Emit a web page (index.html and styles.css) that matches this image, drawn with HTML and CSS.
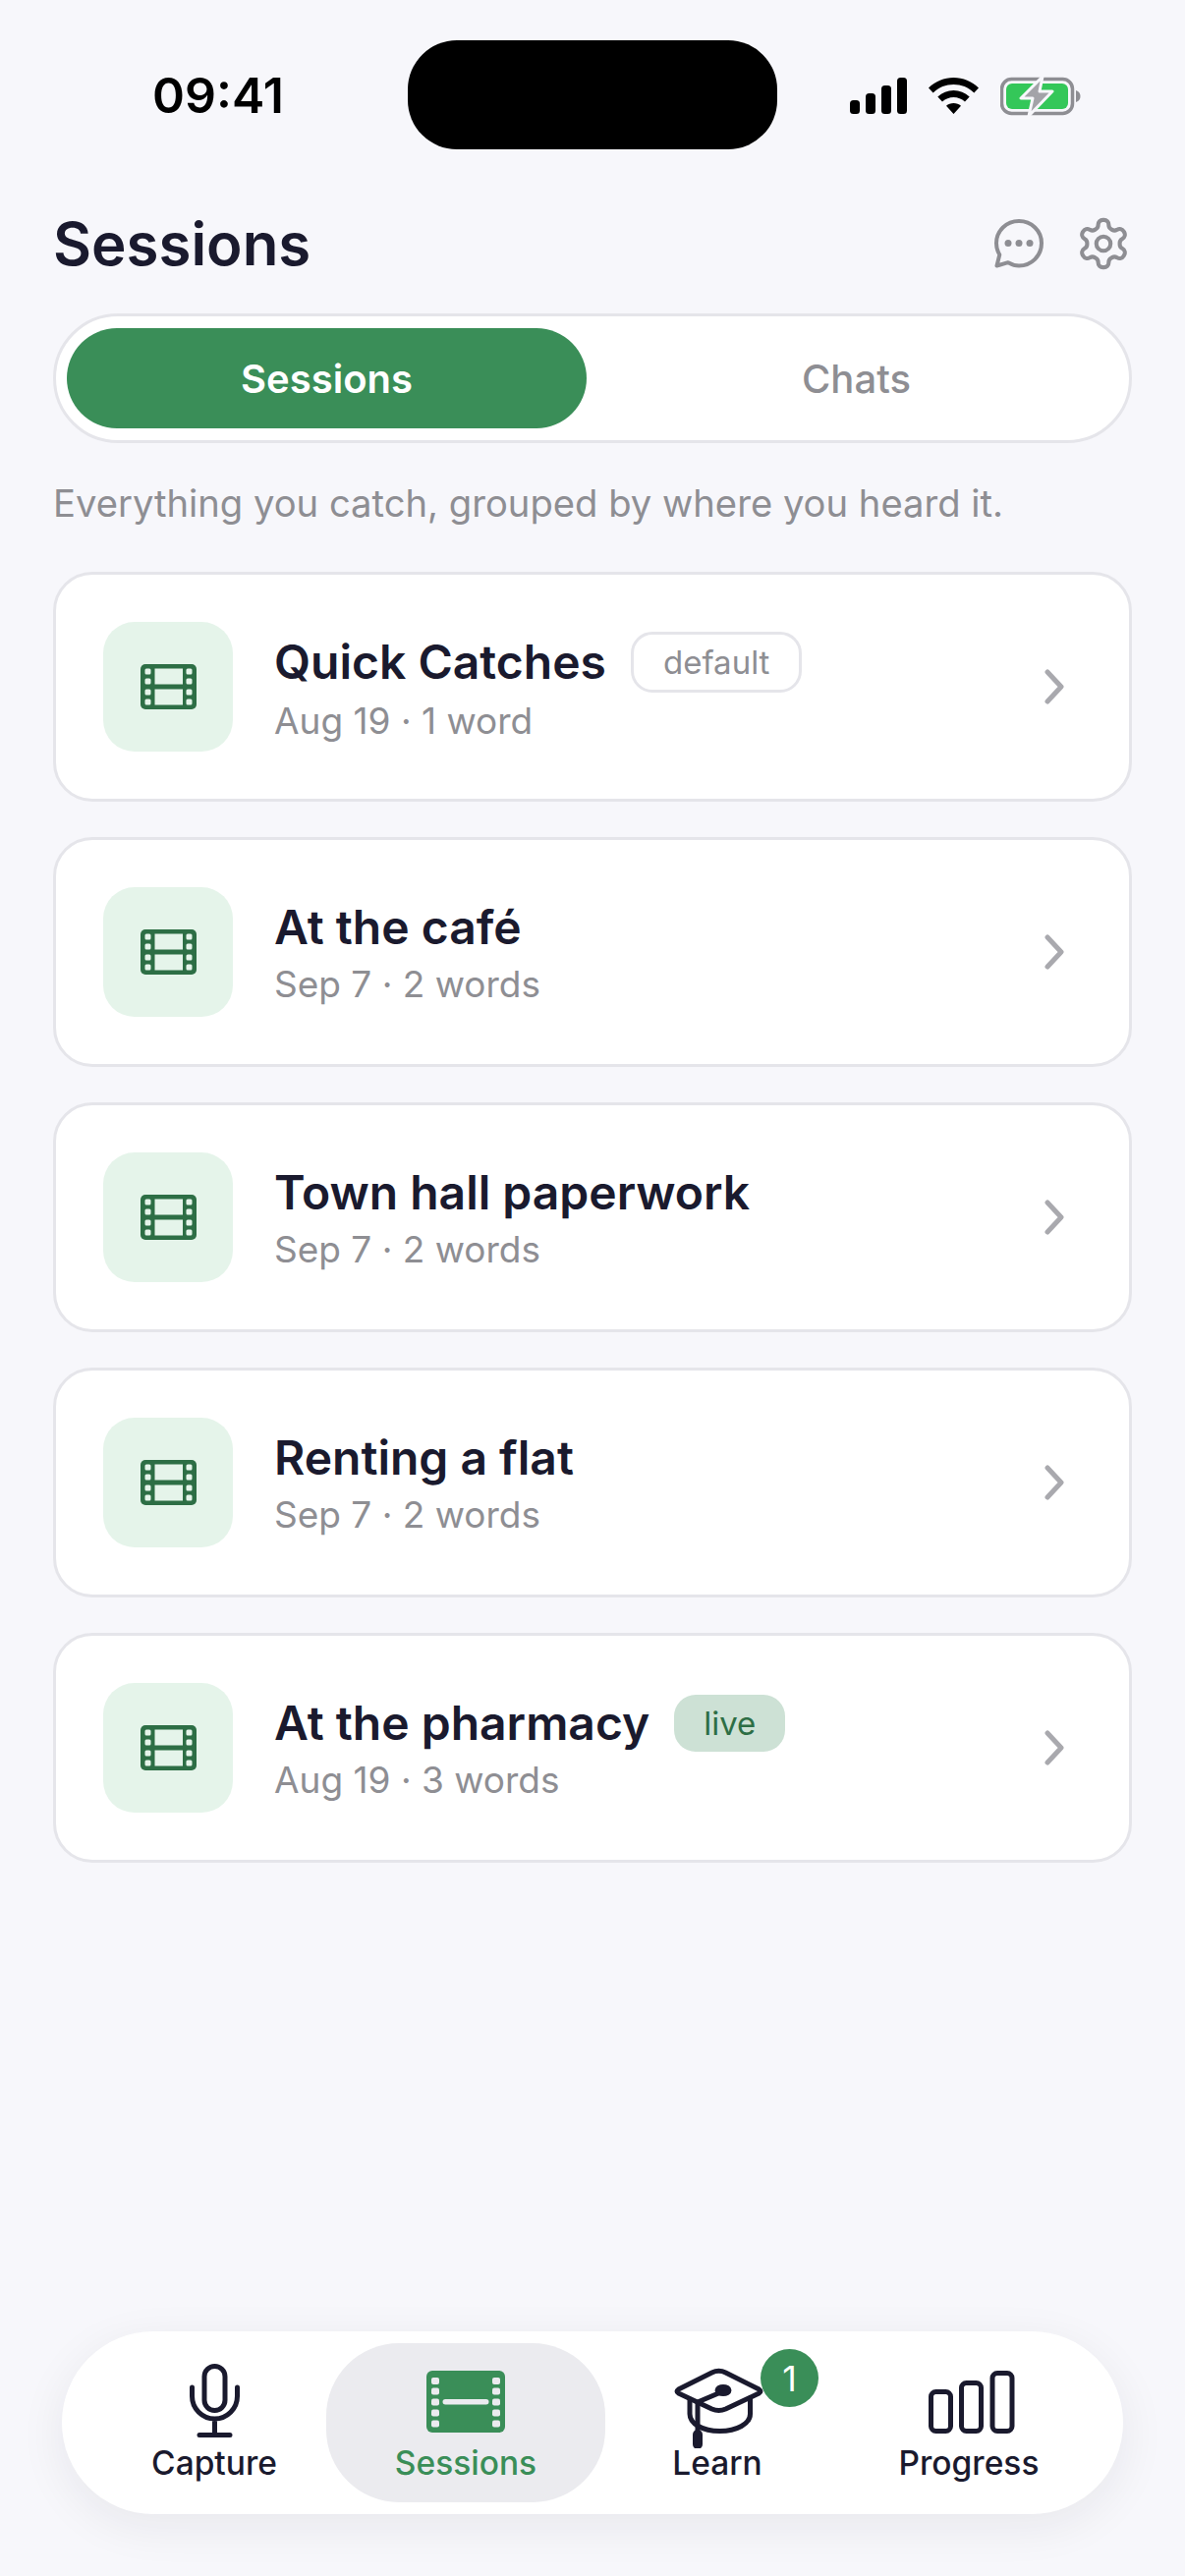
FILE: index.html
```html
<!DOCTYPE html>
<html lang="en">
<head>
<meta charset="utf-8">
<title>Sessions</title>
<link rel="stylesheet" href="styles.css">
</head>
<body>
<svg class="defs" width="0" height="0" aria-hidden="true">
  <symbol id="film" viewBox="0 0 57 46">
    <rect width="57" height="46" rx="5" fill="#2d6e45"/>
    <g fill="#e5f4ea">
      <rect x="4.5" y="4.5" width="6" height="6" rx="1.5"/><rect x="4.5" y="14.5" width="6" height="6" rx="1.5"/><rect x="4.5" y="25.5" width="6" height="6" rx="1.5"/><rect x="4.5" y="35.5" width="6" height="6" rx="1.5"/>
      <rect x="46.5" y="4.5" width="6" height="6" rx="1.5"/><rect x="46.5" y="14.5" width="6" height="6" rx="1.5"/><rect x="46.5" y="25.5" width="6" height="6" rx="1.5"/><rect x="46.5" y="35.5" width="6" height="6" rx="1.5"/>
      <rect x="14.5" y="4.5" width="28.5" height="16"/><rect x="14.5" y="25.5" width="28.5" height="16"/>
    </g>
  </symbol>
  <symbol id="chev" viewBox="0 0 20 36">
    <path d="M3 3l14 15L3 33" fill="none" stroke="#a9a9ae" stroke-width="5" stroke-linecap="round" stroke-linejoin="round"/>
  </symbol>
</svg>
<div class="screen">
  <header class="status">
    <span class="time">09:41</span>
    <div class="island"></div>
    <div class="status-icons">
      <svg width="58" height="38" viewBox="0 0 58 38"><g fill="#000"><rect x="0" y="23" width="10" height="14" rx="3.5"/><rect x="16" y="16" width="10" height="21" rx="3.5"/><rect x="32" y="8" width="10" height="29" rx="3.5"/><rect x="48" y="0" width="10" height="37" rx="3.5"/></g></svg>
      <svg width="51" height="38" viewBox="0 0 51 38"><path d="M25.500 0C35 0 44 3.600 51 10.500L46.300 15.500C40.500 9.800 33.300 7 25.500 7S10.500 9.800 4.700 15.500L0 10.500C7 3.600 16 0 25.500 0zM25.500 13C31.600 13 37.200 15.300 41.700 19.500L37 24.500C33.700 21.500 29.800 20 25.500 20S17.300 21.500 14 24.500L9.300 19.500C13.800 15.300 19.400 13 25.500 13zM25.500 26C28.400 26 31 27 33 28.800L25.500 37L18 28.800C20 27 22.600 26 25.500 26z" fill="#000"/></svg>
      <svg class="batt" width="82" height="40" viewBox="0 0 82 40"><rect x="1.500" y="2.500" width="72" height="35" rx="10" fill="none" stroke="#8e8e93" stroke-width="3.500"/><rect x="6" y="7" width="63" height="26" rx="6" fill="#34c759"/><path d="M77 14c3 1 4.500 3 4.500 6s-1.500 5-4.500 6z" fill="#8e8e93"/><path d="M43 0L21 22h12l-4 18 24-25H40z" fill="#a3a3a8" stroke="#f7f7fb" stroke-width="3" stroke-linejoin="round"/></svg>
    </div>
  </header>

  <main class="content">
    <div class="title-row">
      <h1>Sessions</h1>
      <div class="title-actions">
        <svg width="52" height="52" viewBox="0 0 52 52" fill="none" stroke="#8e8e93" stroke-width="4" stroke-linejoin="round"><path d="M26 3C13.300 3 3 12.900 3 25.500c0 4.300 1.200 8.300 3.300 11.700L3.500 48.500l11.500-3.300C18.200 47 22 48.500 26 48.500c12.700 0 23-10.200 23-23S38.700 3 26 3z"/><g fill="#8e8e93" stroke="none"><circle cx="15" cy="25.500" r="3.500"/><circle cx="26" cy="25.500" r="3.500"/><circle cx="37" cy="25.500" r="3.500"/></g></svg>
        <svg width="58" height="58" viewBox="0 0 24 24" fill="none" stroke="#8e8e93" stroke-width="1.700" stroke-linejoin="round"><path d="M12.220 2h-.44a2 2 0 0 0-2 2v.18a2 2 0 0 1-1 1.730l-.43.25a2 2 0 0 1-2 0l-.15-.08a2 2 0 0 0-2.730.73l-.22.38a2 2 0 0 0 .73 2.730l.15.1a2 2 0 0 1 1 1.720v.51a2 2 0 0 1-1 1.740l-.15.09a2 2 0 0 0-.73 2.730l.22.38a2 2 0 0 0 2.730.73l.15-.08a2 2 0 0 1 2 0l.43.25a2 2 0 0 1 1 1.730V20a2 2 0 0 0 2 2h.44a2 2 0 0 0 2-2v-.18a2 2 0 0 1 1-1.730l.43-.25a2 2 0 0 1 2 0l.15.08a2 2 0 0 0 2.730-.73l.22-.39a2 2 0 0 0-.73-2.730l-.15-.08a2 2 0 0 1-1-1.740v-.5a2 2 0 0 1 1-1.740l.15-.09a2 2 0 0 0 .73-2.730l-.22-.38a2 2 0 0 0-2.730-.73l-.15.08a2 2 0 0 1-2 0l-.43-.25a2 2 0 0 1-1-1.730V4a2 2 0 0 0-2-2z"/><circle cx="12" cy="12" r="3"/></svg>
      </div>
    </div>

    <div class="segment">
      <div class="seg seg-active">Sessions</div>
      <div class="seg">Chats</div>
    </div>

    <p class="hint">Everything you catch, grouped by where you heard it.</p>

    <ul class="cards">
      <li class="card">
        <div class="tile"><svg class="film" width="57" height="46"><use href="#film"/></svg></div>
        <div class="card-text">
          <div class="card-title"><span>Quick Catches</span><span class="tag tag-default">default</span></div>
          <div class="card-sub">Aug 19 · 1 word</div>
        </div>
        <svg class="chev" width="20" height="36"><use href="#chev"/></svg>
      </li>
      <li class="card">
        <div class="tile"><svg class="film" width="57" height="46"><use href="#film"/></svg></div>
        <div class="card-text">
          <div class="card-title"><span>At the café</span></div>
          <div class="card-sub">Sep 7 · 2 words</div>
        </div>
        <svg class="chev" width="20" height="36"><use href="#chev"/></svg>
      </li>
      <li class="card">
        <div class="tile"><svg class="film" width="57" height="46"><use href="#film"/></svg></div>
        <div class="card-text">
          <div class="card-title"><span>Town hall paperwork</span></div>
          <div class="card-sub">Sep 7 · 2 words</div>
        </div>
        <svg class="chev" width="20" height="36"><use href="#chev"/></svg>
      </li>
      <li class="card">
        <div class="tile"><svg class="film" width="57" height="46"><use href="#film"/></svg></div>
        <div class="card-text">
          <div class="card-title"><span>Renting a flat</span></div>
          <div class="card-sub">Sep 7 · 2 words</div>
        </div>
        <svg class="chev" width="20" height="36"><use href="#chev"/></svg>
      </li>
      <li class="card">
        <div class="tile"><svg class="film" width="57" height="46"><use href="#film"/></svg></div>
        <div class="card-text">
          <div class="card-title"><span>At the pharmacy</span><span class="tag tag-live">live</span></div>
          <div class="card-sub">Aug 19 · 3 words</div>
        </div>
        <svg class="chev" width="20" height="36"><use href="#chev"/></svg>
      </li>
    </ul>
  </main>

  <nav class="tabbar">
    <div class="tab">
      <svg class="tab-icon" width="96" height="92" viewBox="0 0 96 92" fill="none" stroke="#1a1a2e" stroke-width="5" stroke-linecap="round"><rect x="38" y="8.500" width="21" height="45" rx="10.500"/><path d="M25.500 30v9a23 23 0 0 0 46 0V30M48.500 63v14M33 78.500h31"/></svg>
      <span class="tab-label">Capture</span>
    </div>
    <div class="tab tab-active">
      <svg class="tab-icon" width="96" height="92" viewBox="0 0 96 92"><rect x="8" y="13" width="80" height="63" rx="6" fill="#3a8e58"/><g fill="#ebebef"><rect x="13" y="20" width="8" height="7" rx="2"/><rect x="13" y="30.500" width="8" height="7" rx="2"/><rect x="13" y="41.500" width="8" height="7" rx="2"/><rect x="13" y="52.500" width="8" height="7" rx="2"/><rect x="13" y="63.500" width="8" height="7" rx="2"/><rect x="75" y="20" width="8" height="7" rx="2"/><rect x="75" y="30.500" width="8" height="7" rx="2"/><rect x="75" y="41.500" width="8" height="7" rx="2"/><rect x="75" y="52.500" width="8" height="7" rx="2"/><rect x="75" y="63.500" width="8" height="7" rx="2"/><rect x="24.500" y="42" width="47" height="5.500" rx="2.750"/></g></svg>
      <span class="tab-label">Sessions</span>
    </div>
    <div class="tab">
      <svg class="tab-icon" width="96" height="92" viewBox="0 0 96 92" fill="none" stroke="#1a1a2e" stroke-width="5" stroke-linecap="round" stroke-linejoin="round"><path d="M42.500 15Q49.500 11.500 56.500 15L90.500 32Q93.500 34 90.500 36L56.500 52Q49.500 55 42.500 52L8.500 36Q5.500 34 8.500 32z"/><path d="M20 42v15c0 10 13 17.500 30.500 17.500S81.500 67 81.500 57V42"/><path d="M54 34L28 45v30"/><ellipse cx="54" cy="33" rx="6" ry="3.500" fill="#1a1a2e"/><path d="M28 78v10" stroke-width="10"/></svg>
      <span class="tab-label">Learn</span>
      <span class="badge">1</span>
    </div>
    <div class="tab">
      <svg class="tab-icon" width="96" height="92" viewBox="0 0 96 92" fill="none" stroke="#1a1a2e" stroke-width="5"><rect x="9.500" y="34.500" width="20" height="40" rx="5"/><rect x="40.500" y="25.500" width="20" height="49" rx="5"/><rect x="72" y="15.500" width="20" height="59" rx="5"/></svg>
      <span class="tab-label">Progress</span>
    </div>
  </nav>
</div>
</body>
</html>
```

FILE: styles.css
```css
* { box-sizing: border-box; }
html, body { margin: 0; padding: 0; }
body { background: #f7f7fb; font-family: Inter, "Liberation Sans", sans-serif; color: #1a1a2e; }
.defs { position: absolute; }
.screen { width: 1206px; height: 2622px; display: flex; flex-direction: column; overflow: hidden; }

.status { height: 194px; padding-top: 41px; display: grid; grid-template-columns: 415px 376px 1fr; align-items: start; }
.time { font-weight: 600; font-size: 50px; line-height: 58px; margin-top: 27px; text-align: center; padding-left: 29px; color: #000; }
.island { height: 111px; border-radius: 50px; background: #000; }
.status-icons { display: flex; align-items: center; margin-top: 37px; margin-left: 74px; gap: 22px; }

.content { padding: 0 54px; flex: 1; }
.title-row { display: flex; justify-content: space-between; align-items: center; height: 108px; }
h1 { margin: 0; font-size: 60px; font-weight: 600; line-height: 72px; letter-spacing: 0; }
.title-actions { display: flex; align-items: center; gap: 31px; }

.segment { margin-top: 17px; height: 132px; background: #fff; border: 3px solid #e5e5ea; border-radius: 66px; padding: 12px 11px; display: flex; }
.seg { flex: 0 0 529px; display: flex; align-items: center; justify-content: center; font-size: 40px; font-weight: 500; color: #8e8e93; border-radius: 51px; }
.seg + .seg { flex: 1; padding-left: 8px; }
.seg-active { background: #3a8e58; color: #fff; font-weight: 600; }

.hint { margin: 38px 0 0; font-size: 38.200px; line-height: 46px; color: #8e8e93; }

.cards { list-style: none; margin: 47px 0 0; padding: 0; display: flex; flex-direction: column; gap: 36px; }
.card { height: 234px; background: #fff; border: 3px solid #e5e5ea; border-radius: 40px; padding: 0 66px 0 48px; display: flex; align-items: center; }
.tile { width: 132px; height: 132px; border-radius: 32px; background: #e5f4ea; display: flex; align-items: center; justify-content: center; flex: none; }
.card-text { flex: 1; margin: 2px 0 0 42px; }
.card-title { display: flex; align-items: center; gap: 25px; font-size: 48px; font-weight: 600; line-height: 58px; }
.card-sub { font-size: 37px; line-height: 46px; color: #8e8e93; margin-top: 6px; }
.tag { font-size: 33px; font-weight: 400; border-radius: 22px; display: inline-flex; align-items: center; justify-content: center; }
.tag-default { height: 62px; color: #8e8e93; border: 3px solid #e5e5ea; padding: 0 30px; }
.tag-live { height: 58px; color: #2d6e45; background: #cde1d5; padding: 0 30px; }
.chev { flex: none; }

.tabbar { margin: 0 63px 63px; height: 186px; background: #fff; border-radius: 93px; padding: 0 29px 0 27px; display: grid; grid-template-columns: repeat(4, 256px); box-shadow: 0 12px 48px rgba(26, 26, 46, 0.07); }
.tab { position: relative; display: flex; flex-direction: column; align-items: center; padding-top: 20px; margin: 12px 0; border-radius: 74px; }
.tab-active { background: #ebebef; margin: 12px -14px; color: #3a8e58; }
.tab-icon { display: block; margin-top: -5px; }
.tab-label { font-size: 33.500px; line-height: 42px; margin-top: -6px; font-weight: 450; }
.badge { position: absolute; top: 6px; left: 172px; width: 59px; height: 59px; border-radius: 50%; background: #3a8e58; color: #fff; font-size: 36px; display: flex; align-items: center; justify-content: center; }
```
